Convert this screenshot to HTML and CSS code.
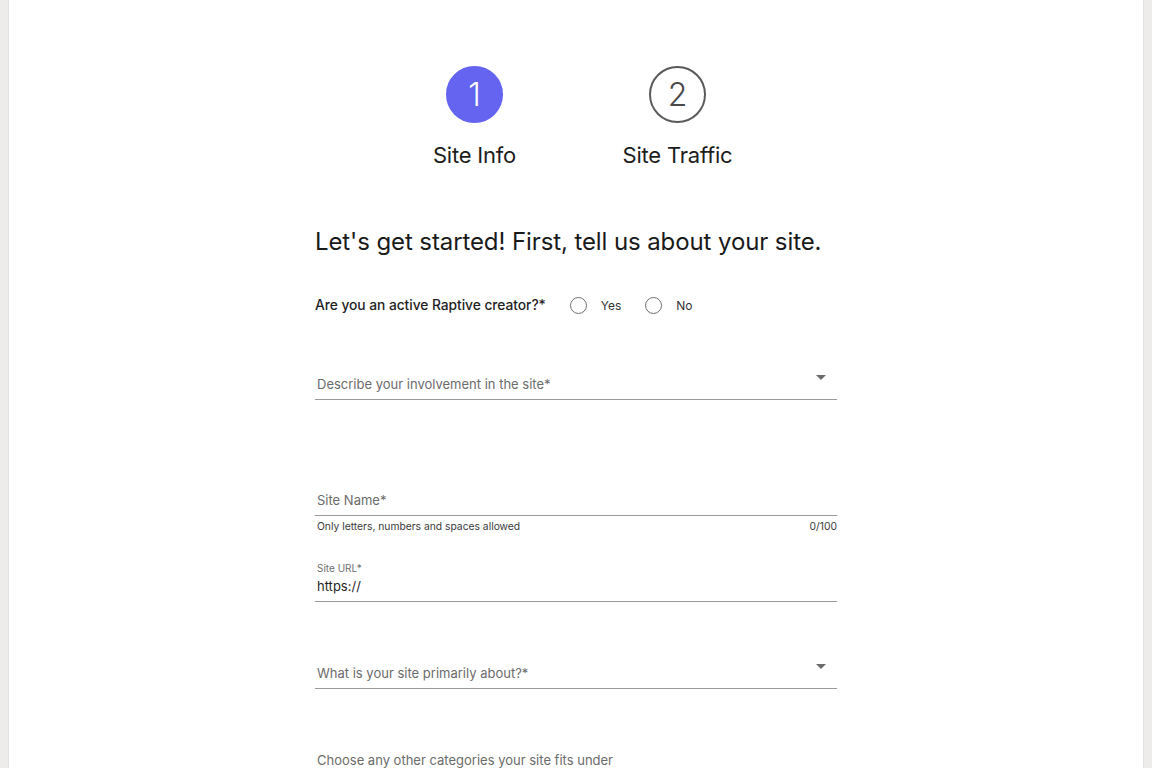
FILE: index.html
```html
<!DOCTYPE html>
<html lang="en">
<head>
<meta charset="utf-8">
<title>Site Info</title>
<link rel="stylesheet" href="styles.css">
</head>
<body>
<div class="page">
  <div class="content">
    <div class="stepper">
      <div class="step">
        <div class="circle active">1</div>
        <div class="step-label">Site Info</div>
      </div>
      <div class="step">
        <div class="circle">2</div>
        <div class="step-label">Site Traffic</div>
      </div>
    </div>

    <h1 class="title">Let's get started! First, tell us about your site.</h1>

    <div class="radio-row">
      <span class="question">Are you an active Raptive creator?*</span>
      <label class="radio"><span class="radio-dot"></span><span class="radio-text">Yes</span></label>
      <label class="radio"><span class="radio-dot"></span><span class="radio-text">No</span></label>
    </div>

    <div class="field select field-involve">
      <span class="field-label">Describe your involvement in the site*</span>
      <span class="caret"></span>
    </div>

    <div class="field field-name">
      <span class="field-label">Site Name*</span>
    </div>
    <div class="hint-row">
      <span>Only letters, numbers and spaces allowed</span>
      <span>0/100</span>
    </div>

    <div class="field field-url">
      <span class="float-label">Site URL*</span>
      <span class="field-value">https://</span>
    </div>

    <div class="field select field-about">
      <span class="field-label">What is your site primarily about?*</span>
      <span class="caret"></span>
    </div>

    <div class="chips-label">Choose any other categories your site fits under</div>
  </div>
</div>
</body>
</html>
```
FILE: styles.css
```css
html, body {
  margin: 0;
  padding: 0;
}
body {
  background: #eeecea;
  font-family: Inter, "Noto Sans", sans-serif;
  color: #1c1c1c;
}
.page {
  margin: 0 8px;
  background: #ffffff;
  border-left: 1px solid #e3e1df;
  border-right: 1px solid #e3e1df;
  min-height: 100vh;
  overflow: hidden;
}
.content {
  width: 522px;
  margin: 0 auto;
  padding-top: 66px;
}
.stepper {
  display: flex;
  justify-content: center;
}
.step {
  width: 203px;
  display: flex;
  flex-direction: column;
  align-items: center;
}
.circle {
  width: 53px;
  height: 53px;
  border-radius: 50%;
  border: 2px solid #5a5a5a;
  display: flex;
  align-items: center;
  justify-content: center;
  font-size: 32px;
  font-weight: 300;
  color: #4a4a4a;
  box-sizing: content-box;
}
.circle.active {
  background: #6464f0;
  border-color: #6464f0;
  color: #ffffff;
}
.step-label {
  margin-top: 18px;
  font-size: 22px;
  line-height: 28px;
  color: #1c1c1c;
  letter-spacing: -0.2px;
}
.title {
  margin: 56px 0 0;
  font-size: 24px;
  line-height: 34px;
  font-weight: 400;
  letter-spacing: -0.1px;
  color: #1a1a1a;
  white-space: nowrap;
}
.radio-row {
  margin-top: 34px;
  display: flex;
  align-items: center;
  height: 24px;
}
.question {
  font-size: 13.8px;
  font-weight: 500;
  letter-spacing: -0.05px;
  color: #1f1f1f;
  margin-right: 24px;
}
.radio {
  display: flex;
  align-items: center;
  margin-right: 24px;
}
.radio-dot {
  width: 15px;
  height: 15px;
  border: 1.5px solid #6f6f6f;
  border-radius: 50%;
  box-sizing: content-box;
}
.radio-text {
  margin-left: 14px;
  font-size: 12px;
  color: #333;
}
.field {
  position: relative;
  border-bottom: 1px solid #9a9a9a;
  display: flex;
  flex-direction: column;
  justify-content: flex-end;
  padding: 0 2px 5px;
  box-sizing: border-box;
  height: 57px;
}
.field-label {
  font-size: 13px;
  line-height: 20px;
  color: #6b6b6b;
}
.caret {
  position: absolute;
  right: 11px;
  bottom: 19px;
  width: 0;
  height: 0;
  border-left: 5px solid transparent;
  border-right: 5px solid transparent;
  border-top: 5px solid #6b6b6b;
}
.field-involve {
  margin-top: 26px;
}
.field-name {
  margin-top: 59px;
}
.hint-row {
  margin-top: 3px;
  padding-left: 2px;
  display: flex;
  justify-content: space-between;
  font-size: 10.3px;
  line-height: 14px;
  color: #3a3a3a;
}
.field-url {
  margin-top: 12px;
  justify-content: flex-start;
  padding-top: 17px;
}
.float-label {
  font-size: 10px;
  line-height: 12px;
  color: #707070;
}
.field-value {
  margin-top: 2px;
  font-size: 13px;
  line-height: 20px;
  color: #1f1f1f;
}
.field-about {
  margin-top: 30px;
}
.chips-label {
  margin-top: 61px;
  padding-left: 2px;
  font-size: 13px;
  line-height: 20px;
  color: #6b6b6b;
}
```
